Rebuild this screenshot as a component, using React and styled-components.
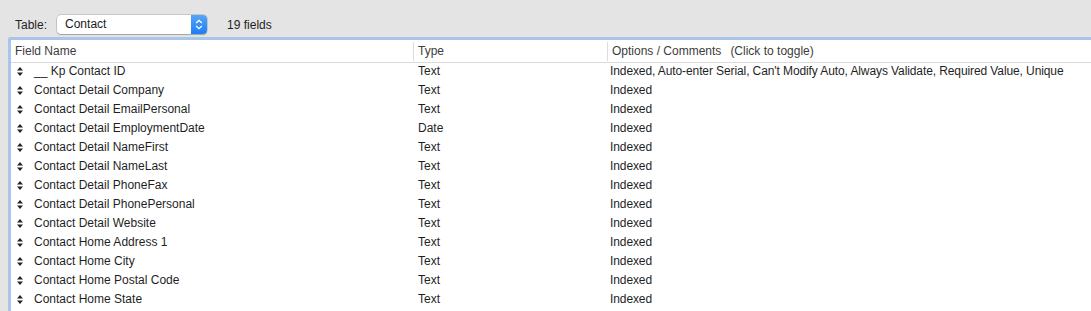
import styled, { createGlobalStyle } from "styled-components";

const fields = [
  ["__ Kp Contact ID", "Text", "Indexed, Auto-enter Serial, Can't Modify Auto, Always Validate, Required Value, Unique"],
  ["Contact Detail Company", "Text", "Indexed"],
  ["Contact Detail EmailPersonal", "Text", "Indexed"],
  ["Contact Detail EmploymentDate", "Date", "Indexed"],
  ["Contact Detail NameFirst", "Text", "Indexed"],
  ["Contact Detail NameLast", "Text", "Indexed"],
  ["Contact Detail PhoneFax", "Text", "Indexed"],
  ["Contact Detail PhonePersonal", "Text", "Indexed"],
  ["Contact Detail Website", "Text", "Indexed"],
  ["Contact Home Address 1", "Text", "Indexed"],
  ["Contact Home City", "Text", "Indexed"],
  ["Contact Home Postal Code", "Text", "Indexed"],
  ["Contact Home State", "Text", "Indexed"],
];

const GlobalStyle = createGlobalStyle`
  html, body {
    margin: 0;
    height: 311px;
    overflow: hidden;
    background: #e4e4e4;
  }
  body {
    font-family: "Liberation Sans", Arial, sans-serif;
    font-size: 12px;
    color: #1f1f1f;
  }
`;

function MoveHandle() {
  return (
    <svg width="6" height="9" viewBox="0 0 6 9">
      <path d="M3 0 L6 3.6 L0 3.6 Z" fill="#222" />
      <path d="M3 9 L6 5.4 L0 5.4 Z" fill="#222" />
    </svg>
  );
}

function Stepper() {
  return (
    <svg width="8" height="11" viewBox="0 0 8 11">
      <path d="M1.2 4 L4 1.3 L6.8 4" stroke="#fff" strokeWidth="1.3" fill="none" />
      <path d="M1.2 7 L4 9.7 L6.8 7" stroke="#fff" strokeWidth="1.3" fill="none" />
    </svg>
  );
}

export default function App() {
  return (
    <Window>
      <GlobalStyle />
      <Toolbar>
        <Label>Table:</Label>
        <Popup>
          <PopupText>Contact</PopupText>
          <PopupArrows>
            <Stepper />
          </PopupArrows>
        </Popup>
        <Count>19 fields</Count>
      </Toolbar>
      <Panel>
        <HeaderRow>
          <HeadCell $width={402}>Field Name</HeadCell>
          <HeadCell $width={194} $divider>Type</HeadCell>
          <HeadCell $divider>
            Options / Comments<Hint>(Click to toggle)</Hint>
          </HeadCell>
        </HeaderRow>
        {fields.map(([name, type, options]) => (
          <Row key={name}>
            <NameCell>
              <Handle>
                <MoveHandle />
              </Handle>
              {name}
            </NameCell>
            <Cell $width={194}>{type}</Cell>
            <Cell $narrow>{options}</Cell>
          </Row>
        ))}
      </Panel>
    </Window>
  );
}

const Window = styled.div`
  display: flex;
  flex-direction: column;
  height: 311px;
  overflow: hidden;
`;

const Toolbar = styled.div`
  display: flex;
  align-items: center;
  flex: none;
  height: 37px;
  padding: 12px 0 0 15px;
  box-sizing: border-box;
`;

const Label = styled.span`
  color: #262626;
  margin-right: 10px;
`;

const Popup = styled.div`
  display: flex;
  align-items: stretch;
  width: 150px;
  height: 19px;
  box-sizing: border-box;
  background: #fff;
  border-radius: 4px;
  box-shadow: 0 0 0 0.5px rgba(0, 0, 0, 0.25), 0 1px 1px rgba(0, 0, 0, 0.18);
  overflow: hidden;
`;

const PopupText = styled.span`
  flex: 1;
  padding-left: 8px;
  line-height: 19px;
  color: #1a1a1a;
`;

const PopupArrows = styled.span`
  width: 16px;
  display: flex;
  align-items: center;
  justify-content: center;
  background: linear-gradient(#58a5f8, #1c7ef2);
`;

const Count = styled.span`
  margin-left: 20px;
  color: #1f1f1f;
`;

const Panel = styled.div`
  flex: 1;
  min-height: 0;
  overflow: hidden;
  margin-left: 8px;
  background: #fff;
  border: 3px solid #a7c6e9;
  border-right: none;
  border-bottom: none;
  border-top-left-radius: 3px;
`;

const HeaderRow = styled.div`
  display: flex;
  height: 21px;
  align-items: center;
  border-bottom: 1px solid #dadada;
  padding-top: 1px;
  box-sizing: content-box;
`;

const HeadCell = styled.div`
  box-sizing: border-box;
  width: ${(p) => (p.$width ? `${p.$width}px` : "auto")};
  flex: ${(p) => (p.$width ? "none" : "1")};
  height: 19px;
  line-height: 19px;
  padding-left: 4px;
  color: #3c3c3c;
  border-left: ${(p) => (p.$divider ? "1px solid #dcdcdc" : "none")};
  white-space: nowrap;
`;

const Hint = styled.span`
  margin-left: 9px;
`;

const Row = styled.div`
  display: flex;
  height: 19px;
  line-height: 17px;
  align-items: flex-start;
`;

const NameCell = styled.div`
  width: 402px;
  display: flex;
  align-items: center;
  padding-left: 6px;
  box-sizing: border-box;
  white-space: nowrap;
`;

const Handle = styled.span`
  display: inline-flex;
  width: 17px;
`;

const Cell = styled.div`
  box-sizing: border-box;
  width: ${(p) => (p.$width ? `${p.$width}px` : "auto")};
  flex: ${(p) => (p.$width ? "none" : "1")};
  padding-left: ${(p) => (p.$narrow ? "3px" : "5px")};
  letter-spacing: ${(p) => (p.$narrow ? "-0.1px" : "0")};
  white-space: nowrap;
`;
